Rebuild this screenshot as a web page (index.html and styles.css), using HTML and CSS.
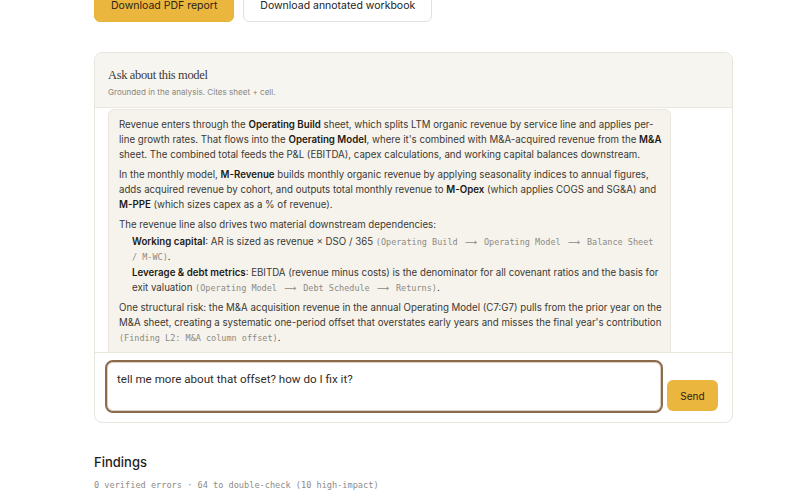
FILE: index.html
```html
<!DOCTYPE html>
<html lang="en">
<head>
    <meta charset="UTF-8">
    <title>Model review</title>
    <link rel="stylesheet" href="styles.css">
</head>
<body>

<div class="page">
    <div class="downloads">
        <button class="btn btn-primary">Download PDF report</button>
        <button class="btn btn-outline">Download annotated workbook</button>
    </div>

    <div class="chat">
        <div class="chat-header">
            <div class="chat-title">Ask about this model</div>
            <div class="chat-sub">Grounded in the analysis. Cites sheet + cell.</div>
        </div>

        <div class="chat-log">
            <div class="msg">
                <p>Revenue enters through the <b>Operating Build</b> sheet, which splits LTM organic revenue by service line and applies per-<wbr>line growth rates. That flows into the <b>Operating Model</b>, where it's combined with M&amp;A-acquired revenue from the <b>M&amp;A</b> sheet. The combined total feeds the P&amp;L (EBITDA), capex calculations, and working capital balances downstream.</p>
                <p>In the monthly model, <b>M-Revenue</b> builds monthly organic revenue by applying seasonality indices to annual figures, adds acquired revenue by cohort, and outputs total monthly revenue to <b>M-Opex</b> (which applies COGS and SG&amp;A) and <b>M-PPE</b> (which sizes capex as a % of revenue).</p>
                <p>The revenue line also drives two material downstream dependencies:</p>
                <ul class="msg-list">
                    <li><b>Working capital</b>: AR is sized as revenue × DSO / 365 <code>(Operating Build <span class="arr">⟶</span> Operating Model <span class="arr">⟶</span> Balance Sheet <span class="nowrap">/ M-WC)</span></code>.</li>
                    <li><b>Leverage &amp; debt metrics</b>: EBITDA (revenue minus costs) is the denominator for all covenant ratios and the basis for exit valuation <code>(Operating Model <span class="arr">⟶</span> Debt Schedule <span class="arr">⟶</span> Returns)</code>.</li>
                </ul>
                <p>One structural risk: the M&amp;A acquisition revenue in the annual Operating Model (C7:G7) pulls from the prior year on the M&amp;A sheet, creating a systematic one-period offset that overstates early years and misses the final year's contribution <code>(Finding L2: M&amp;A column offset)</code>.</p>
                <p>Fixing it means re-pointing the row to the same-year column.</p>
            </div>
        </div>

        <div class="chat-input">
            <textarea class="chat-box">tell me more about that offset? how do I fix it?</textarea>
            <button class="btn btn-send">Send</button>
        </div>
    </div>

    <h2 class="findings-title">Findings</h2>
    <div class="findings-sub">0 verified errors · 64 to double-check (10 high-impact)</div>
</div>

</body>
</html>
```

FILE: styles.css
```css
body {
    margin: 0;
    background: #fff;
    font-family: Inter, "Noto Sans", sans-serif;
    color: #3b3833;
}
.page {
    margin-left: 94px;
    width: 639px;
}

.downloads {
    display: flex;
    gap: 9px;
    margin-top: -12px;
}
.btn {
    font-family: Inter, "Noto Sans", sans-serif;
    border-radius: 6px;
    cursor: pointer;
}
.btn-primary {
    height: 34px;
    padding: 0 16px;
    border: 1px solid #e6b23a;
    background-color: #ebb63d;
    color: #2a2418;
    font-size: 10.5px;
}
.btn-outline {
    height: 34px;
    padding: 0 16px;
    border: 1px solid #e3e1dd;
    background-color: #fff;
    color: #222;
    font-size: 10.5px;
}

.chat {
    margin-top: 30px;
    border: 1px solid #e8e5df;
    border-radius: 8px;
    overflow: hidden;
}
.chat-header {
    height: 55px;
    padding: 14px 13px 0;
    box-sizing: border-box;
    background-color: #f7f5ef;
    border-bottom: 1px solid #ebe7df;
}
.chat-title {
    font-family: "Liberation Serif", serif;
    font-size: 12.5px;
    letter-spacing: -0.35px;
    color: #3d3a35;
    line-height: 16px;
}
.chat-sub {
    margin-top: 4px;
    font-size: 8.1px;
    color: #8b8780;
}

.chat-log {
    height: 245px;
    overflow: hidden;
    padding: 1px 0 0 13px;
    box-sizing: border-box;
    border-bottom: 1px solid #ebe7df;
}
.msg {
    width: 563px;
    box-sizing: border-box;
    padding: 7px 6px 8px 10px;
    background-color: #f6f3ec;
    border: 1px solid #e9e5dc;
    border-radius: 6px;
    font-size: 9.7px;
    line-height: 15px;
    color: #3c3934;
}
.msg p {
    margin: 0 0 5px;
}
.msg b {
    font-weight: 600;
    color: #1d1a16;
}
.msg code {
    font-family: "DejaVu Sans Mono", monospace;
    font-size: 8.5px;
    line-height: 0;
    color: #8d8a84;
}
.msg code .arr {
    display: inline-block;
    width: 16px;
    text-align: center;
    font-family: "DejaVu Sans", sans-serif;
}
.nowrap {
    white-space: nowrap;
}
.msg-list {
    list-style: none;
    margin: -3px 0 5px;
    padding-left: 13px;
}
.msg-list li {
    margin-bottom: 1px;
}

.chat-input {
    display: flex;
    align-items: flex-end;
    gap: 6px;
    padding: 9px 14px 11px 12px;
}
.chat-box {
    flex: 1;
    height: 49px;
    box-sizing: border-box;
    padding: 9px 9px 8px;
    border: 1px solid #d9cfc4;
    outline: 2px solid #8c6a4c;
    outline-offset: 0;
    border-radius: 6px;
    resize: none;
    font-family: Roboto, Inter, sans-serif;
    font-size: 11.6px;
    color: #2f2c28;
    background: #fff;
}
.btn-send {
    width: 51px;
    height: 31px;
    border: none;
    background-color: #ebb63d;
    color: #2a2418;
    font-size: 10px;
}

.findings-title {
    margin: 31px 0 0;
    font-size: 13px;
    font-weight: 500;
    color: #1f1d1a;
}
.findings-sub {
    margin-top: 10px;
    font-family: "DejaVu Sans Mono", monospace;
    font-size: 8.6px;
    color: #8f8c87;
}
```
